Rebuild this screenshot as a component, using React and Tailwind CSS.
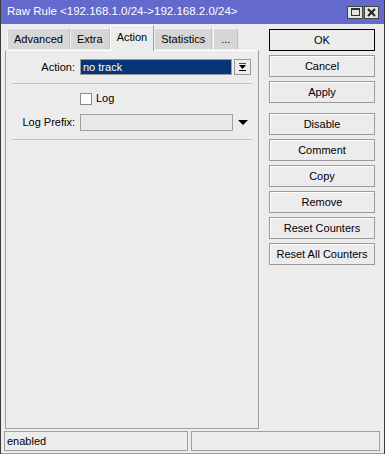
import React from 'react';

const buttons = [
  ['OK', true],
  ['Cancel'],
  ['Apply'],
  null,
  ['Disable'],
  ['Comment'],
  ['Copy'],
  ['Remove'],
  ['Reset Counters'],
  ['Reset All Counters'],
];

const tabs = ['Advanced', 'Extra', 'Action', 'Statistics', '...'];

const WinButton = ({ label, primary }) => (
  <button
    className={`h-[22px] w-full flex items-center justify-center text-[11px] text-black bg-[#ececec] border ${
      primary ? 'border-black' : 'border-[#9a9a9a] shadow-[inset_1px_1px_0_#ffffff]'
    }`}
  >
    {label}
  </button>
);

export default function App() {
  return (
    <div className="w-[385px] h-[454px] flex flex-col bg-[#ececec] border-l border-r border-[#3a3a3a] font-['Liberation_Sans',Arial,sans-serif] text-black select-none overflow-hidden">
      {/* Title bar */}
      <div className="h-[24px] shrink-0 bg-[#6469cd] flex items-center pl-[6px] pr-[5px]">
        <span className="text-white text-[11.5px] flex-1 whitespace-nowrap">
          Raw Rule &lt;192.168.1.0/24-&gt;192.168.2.0/24&gt;
        </span>
        <div className="flex gap-[1px]">
          <div className="w-[16px] h-[13px] bg-[#e4e4e4] border border-[#444] flex items-center justify-center">
            <div className="w-[9px] h-[8px] border border-[#333] border-t-2" />
          </div>
          <div className="w-[15px] h-[13px] bg-[#e4e4e4] border border-[#444] flex items-center justify-center">
            <svg width="9" height="9" viewBox="0 0 9 9">
              <path d="M1 1 L8 8 M8 1 L1 8" stroke="#222" strokeWidth="2" />
            </svg>
          </div>
        </div>
      </div>

      {/* Body */}
      <div className="flex-1 flex min-h-0">
        {/* Left: tabs + panel */}
        <div className="w-[254px] ml-[4px] flex flex-col pb-[2px]">
          <div className="h-[26px] shrink-0 flex items-end pl-[2px] relative z-10">
            {tabs.map((t) => {
              const active = t === 'Action';
              return (
                <div
                  key={t}
                  className={`flex items-center text-[11px] px-[6px] border-l border-t ${
                    active
                      ? 'h-[26px] bg-[#ececec] border-white border-r border-r-[#a0a0a0] -mb-px pb-[2px]'
                      : 'h-[21px] bg-[#d6d6d6] border-[#f4f4f4] border-r border-r-[#c0c0c0] mb-[1px]'
                  } ${t === '...' ? 'ml-[1px] px-[7px]' : ''}`}
                >
                  {t}
                </div>
              );
            })}
          </div>
          <div className="flex-1 border border-[#a0a0a0] border-t-white flex flex-col pt-[8px]">
            {/* Action row */}
            <div className="flex items-center h-[16px]">
              <div className="w-[70px] text-right text-[11px] pr-[1px]">Action:</div>
              <div className="ml-[4px] w-[152px] h-[16px] bg-[#063578] border border-[#9a9a9a] text-white text-[11px] leading-[14px] pl-[2px]">
                no track
              </div>
              <div className="ml-[2px] w-[17px] h-[16px] border border-[#9a9a9a] bg-[#ececec] flex items-center justify-center">
                <svg width="7" height="8" viewBox="0 0 7 8">
                  <path d="M0 0 H7" stroke="#000" strokeWidth="1.4" />
                  <path d="M0 2 H7 L3.5 6 Z" fill="#000" />
                  <path d="M0 7.5 H7" stroke="#000" strokeWidth="1" />
                </svg>
              </div>
            </div>
            <div className="mx-[6px] mt-[8px] h-px bg-[#c4c4c4]" />

            {/* Log checkbox */}
            <div className="flex items-center mt-[8px] h-[13px] pl-[74px]">
              <div className="w-[12px] h-[12px] bg-white border border-[#8a8a8a]" />
              <span className="ml-[4px] text-[11px]">Log</span>
            </div>

            {/* Log Prefix */}
            <div className="flex items-center mt-[9px] h-[17px]">
              <div className="w-[70px] text-right text-[11px] pr-[1px]">Log Prefix:</div>
              <div className="ml-[4px] w-[153px] h-[17px] bg-[#e9e9e9] border border-[#a0a0a0]" />
              <svg className="ml-[5px]" width="10" height="6" viewBox="0 0 10 6">
                <path d="M0 0 H10 L5 5 Z" fill="#000" />
              </svg>
            </div>
            <div className="mx-[6px] mt-[8px] h-px bg-[#c4c4c4]" />
          </div>
        </div>

        {/* Right: buttons */}
        <div className="ml-[10px] w-[106px] pt-[5px] flex flex-col gap-[4px]">
          {buttons.map((b, i) =>
            b ? <WinButton key={i} label={b[0]} primary={b[1]} /> : <div key={i} className="h-[2px]" />
          )}
        </div>
      </div>

      {/* Status bar */}
      <div className="h-[23px] shrink-0 flex gap-[3px] pl-[3px] pr-[4px] pb-[3px] border-b border-[#9a9a9a]">
        <div className="w-[184px] h-[20px] border border-[#a0a0a0] text-[11px] leading-[18px] pl-[2px]">enabled</div>
        <div className="flex-1 h-[20px] border border-[#a0a0a0]" />
      </div>
    </div>
  );
}
